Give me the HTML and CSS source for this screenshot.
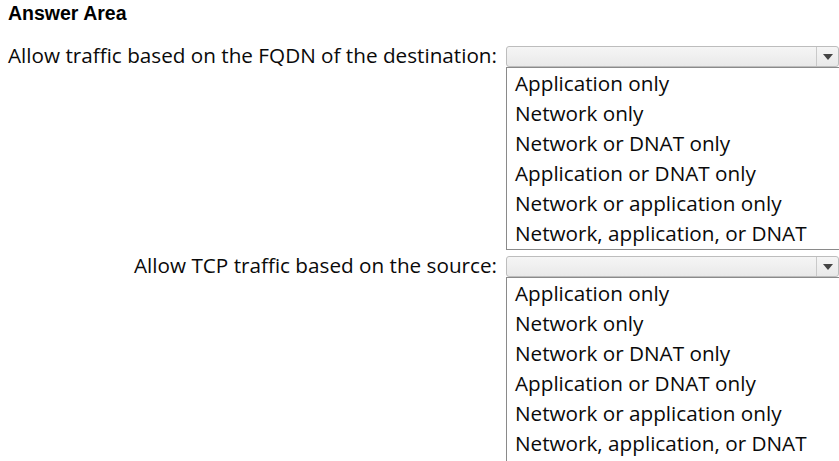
FILE: index.html
```html
<!DOCTYPE html>
<html>
<head>
<meta charset="utf-8">
<link rel="stylesheet" href="styles.css">
</head>
<body>
<h2 class="title">Answer Area</h2>
<div class="question">
  <div class="label">Allow traffic based on the FQDN of the destination:</div>
  <div class="control">
    <div class="select"><span class="arrow"></span></div>
    <ul class="list">
      <li>Application only</li>
      <li>Network only</li>
      <li>Network or DNAT only</li>
      <li>Application or DNAT only</li>
      <li>Network or application only</li>
      <li>Network, application, or DNAT</li>
    </ul>
  </div>
</div>
<div class="question">
  <div class="label">Allow TCP traffic based on the source:</div>
  <div class="control">
    <div class="select"><span class="arrow"></span></div>
    <ul class="list list-last">
      <li>Application only</li>
      <li>Network only</li>
      <li>Network or DNAT only</li>
      <li>Application or DNAT only</li>
      <li>Network or application only</li>
      <li>Network, application, or DNAT</li>
    </ul>
  </div>
</div>
</body>
</html>
```
FILE: styles.css
```css
html, body {
  margin: 0;
  padding: 0;
  background: #fff;
  overflow: hidden;
}
body {
  font-family: "Open Sans", "Noto Sans", sans-serif;
  color: #0a0a0a;
}
.title {
  margin: 0;
  padding: 2px 0 0 8px;
  height: 43px;
  box-sizing: border-box;
  font: bold 19.5px/22px "Liberation Sans", Arial, sans-serif;
  color: #000;
}
.question {
  display: grid;
  grid-template-columns: 506px 340px;
  align-items: start;
  margin-bottom: 3px;
}
.label {
  text-align: right;
  padding-right: 9px;
  font-size: 20.7px;
  line-height: 21px;
  height: 21px;
  margin-top: 2px;
  white-space: nowrap;
}
.control {
  display: flex;
  flex-direction: column;
  margin-top: 3px;
}
.select {
  height: 21px;
  box-sizing: border-box;
  border: 1px solid #bdbdbd;
  border-radius: 3px;
  background: linear-gradient(#f5f5f5, #e9e9e9);
  width: 333px;
  display: flex;
  justify-content: flex-end;
}
.arrow {
  width: 21px;
  border-left: 1px solid #c9c9c9;
  display: flex;
  align-items: center;
  justify-content: center;
}
.arrow::after {
  content: "";
  border-left: 5px solid transparent;
  border-right: 5px solid transparent;
  border-top: 6px solid #444;
}
.list {
  list-style: none;
  margin: 0;
  padding: 0 0 1px 8px;
  border: 1px solid #8a8a8a;
  border-right: none;
}
.list-last {
  padding-bottom: 6px;
}
.list li {
  font-size: 20.7px;
  line-height: 30px;
  height: 30px;
  white-space: nowrap;
}
```
